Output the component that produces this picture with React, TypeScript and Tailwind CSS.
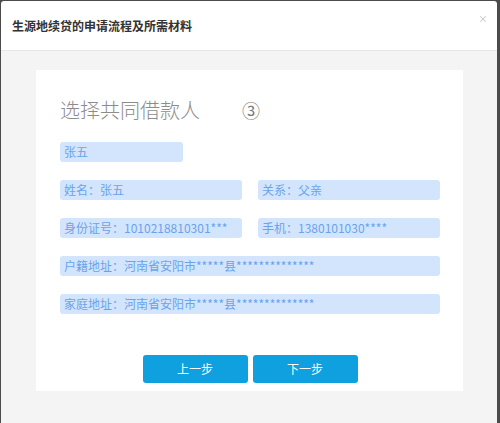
import { X } from "lucide-react"

const FONT = "font-['Noto_Sans_CJK_SC','Noto_Sans',sans-serif]"

function Field({ label, className }: { label: string; className?: string }) {
  return (
    <div
      className={`flex h-5 items-center rounded-[3px] bg-[#d3e5fc] px-1 text-[12px] leading-none text-[#6aa3ec] ${className ?? ""}`}
    >
      {label}
    </div>
  )
}

export default function App() {
  return (
    <div className={`h-[423px] w-[500px] overflow-hidden bg-[#4b4b4b] pl-px pr-[3px] pt-px ${FONT}`}>
      <div className="flex h-full flex-col rounded-t-[3px] bg-white">
        <div className="flex h-[50px] shrink-0 items-center justify-between border-b border-[#e6e6e6] pl-[11px] pr-[9px]">
          <span className="text-[12px] font-semibold text-[#333]">生源地续贷的申请流程及所需材料</span>
          <X className="mb-[14px] h-[10px] w-[10px] text-[#c8c8c8]" strokeWidth={2.5} />
        </div>
        <div className="flex-1 bg-[#f4f4f4] pl-[35px] pr-[34px] pt-[19px]">
          <div className="h-[321px] bg-white pl-6 pt-[27px]">
            <div className="flex items-center text-[20px] font-light leading-[26px] text-[#8c8c8c]">
              <span>选择共同借款人</span>
              <span className="ml-[42px] text-[18px] font-normal text-[#7a7a7a]">③</span>
            </div>
            <div className="mt-[19px] flex w-[380px] flex-col gap-[18px]">
              <Field label="张五" className="w-[123px]" />
              <div className="flex gap-4">
                <Field label="姓名：张五" className="w-[182px]" />
                <Field label="关系：父亲" className="w-[182px]" />
              </div>
              <div className="flex gap-4">
                <Field label="身份证号：1010218810301***" className="w-[182px]" />
                <Field label="手机：1380101030****" className="w-[182px]" />
              </div>
              <Field label="户籍地址：河南省安阳市*****县**************" />
              <Field label="家庭地址：河南省安阳市*****县**************" />
            </div>
            <div className="mt-[41px] flex w-[380px] justify-center gap-[5px]">
              <button
                type="button"
                className="h-7 w-[105px] rounded-[3px] bg-[#0ea0df] text-[12px] text-white"
              >
                上一步
              </button>
              <button
                type="button"
                className="h-7 w-[105px] rounded-[3px] bg-[#0ea0df] text-[12px] text-white"
              >
                下一步
              </button>
            </div>
          </div>
        </div>
      </div>
    </div>
  )
}
